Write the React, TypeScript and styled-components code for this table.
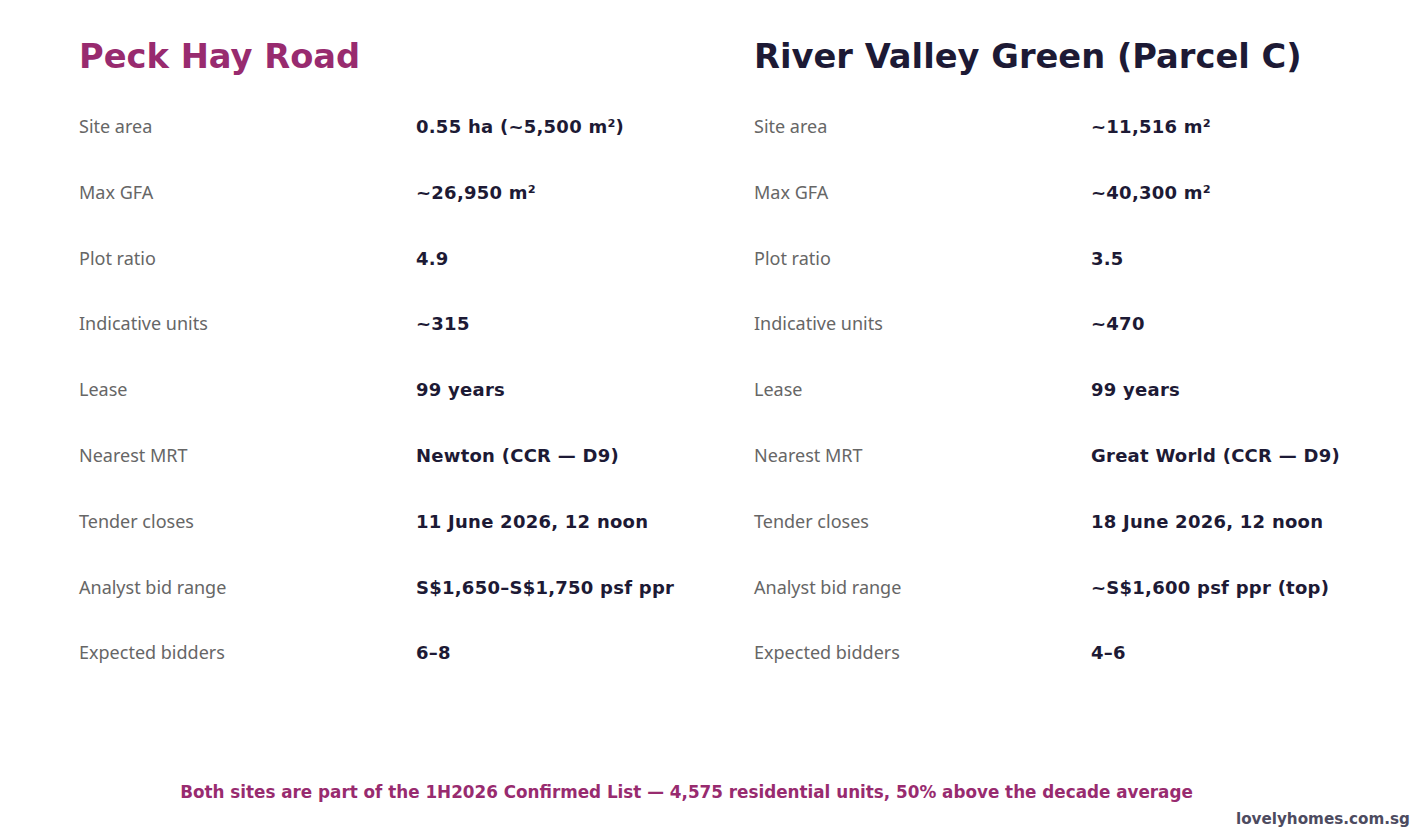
import React from "react";
import styled, { createGlobalStyle } from "styled-components";

const Global = createGlobalStyle`
  html, body { margin: 0; padding: 0; background: #ffffff; }
  body { font-family: "DejaVu Sans", sans-serif; }
`;

const Page = styled.div`
  width: 1421px;
  height: 837px;
  box-sizing: border-box;
  padding: 35px 0 0 79px;
  display: flex;
  flex-direction: column;
  position: relative;
  overflow: hidden;
`;

const Columns = styled.div`
  display: grid;
  grid-template-columns: 675px 675px;
`;

const Site = styled.section`
  display: flex;
  flex-direction: column;
`;

const Title = styled.h1<{ $accent?: boolean }>`
  margin: 0 0 36px;
  font-family: "DejaVu Sans", sans-serif;
  font-weight: bold;
  font-size: 33.7px;
  line-height: 44px;
  color: ${(p) => (p.$accent ? "#982b6f" : "#1d1a35")};
  white-space: nowrap;
`;

const Row = styled.div`
  display: grid;
  grid-template-columns: 337px 1fr;
  height: 65.8px;
  align-items: start;
`;

const Label = styled.span`
  font-family: "Noto Sans", "DejaVu Sans", sans-serif;
  font-size: 18px;
  line-height: 22px;
  color: #666666;
`;

const Value = styled.span`
  font-family: "DejaVu Sans", sans-serif;
  font-weight: bold;
  font-size: 18px;
  letter-spacing: 0.25px;
  line-height: 24px;
  color: #1d1a35;
  white-space: nowrap;
`;

const Footer = styled.p`
  margin: 0;
  position: absolute;
  left: 0;
  width: 1373px;
  top: 781px;
  text-align: center;
  font-family: "DejaVu Sans", sans-serif;
  font-weight: bold;
  font-size: 16.8px;
  line-height: 22px;
  color: #982b6f;
  white-space: nowrap;
`;

const Credit = styled.span`
  position: absolute;
  right: 11px;
  top: 809px;
  font-family: "DejaVu Sans", sans-serif;
  font-weight: bold;
  font-size: 15.2px;
  line-height: 20px;
  color: #4d4b5f;
`;

type Item = [string, string];

const peck: Item[] = [
  ["Site area", "0.55 ha (~5,500 m²)"],
  ["Max GFA", "~26,950 m²"],
  ["Plot ratio", "4.9"],
  ["Indicative units", "~315"],
  ["Lease", "99 years"],
  ["Nearest MRT", "Newton (CCR — D9)"],
  ["Tender closes", "11 June 2026, 12 noon"],
  ["Analyst bid range", "S$1,650–S$1,750 psf ppr"],
  ["Expected bidders", "6–8"],
];

const river: Item[] = [
  ["Site area", "~11,516 m²"],
  ["Max GFA", "~40,300 m²"],
  ["Plot ratio", "3.5"],
  ["Indicative units", "~470"],
  ["Lease", "99 years"],
  ["Nearest MRT", "Great World (CCR — D9)"],
  ["Tender closes", "18 June 2026, 12 noon"],
  ["Analyst bid range", "~S$1,600 psf ppr (top)"],
  ["Expected bidders", "4–6"],
];

const SiteBlock = ({ title, accent, items }: { title: string; accent?: boolean; items: Item[] }) => (
  <Site>
    <Title $accent={accent}>{title}</Title>
    {items.map(([l, v]) => (
      <Row key={l}>
        <Label>{l}</Label>
        <Value>{v}</Value>
      </Row>
    ))}
  </Site>
);

export default function App() {
  return (
    <>
      <Global />
      <Page>
        <Columns>
          <SiteBlock title="Peck Hay Road" accent items={peck} />
          <SiteBlock title="River Valley Green (Parcel C)" items={river} />
        </Columns>
        <Footer>
          Both sites are part of the 1H2026 Confirmed List — 4,575 residential units, 50% above the decade average
        </Footer>
        <Credit>lovelyhomes.com.sg</Credit>
      </Page>
    </>
  );
}
